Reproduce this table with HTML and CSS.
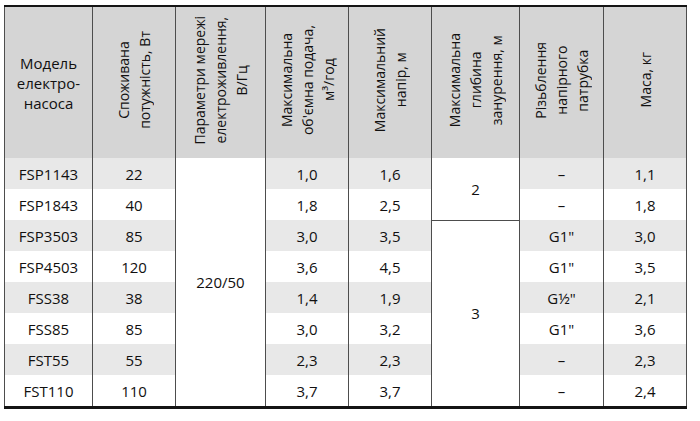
FILE: index.html
```html
<!DOCTYPE html>
<html lang="uk">
<head>
<meta charset="utf-8">
<title>Технічні характеристики</title>
<link rel="stylesheet" href="styles.css">
</head>
<body>
<table class="spec">
  <colgroup>
    <col class="c1"><col class="c2"><col class="c3"><col class="c4">
    <col class="c5"><col class="c6"><col class="c7"><col class="c8">
  </colgroup>
  <thead>
    <tr>
      <th class="h-flat">Модель<br>електро-<br>насоса</th>
      <th><div class="vt">Споживана<br>потужність, Вт</div></th>
      <th><div class="vt">Параметри мережі<br>електроживлення,<br>В/Гц</div></th>
      <th><div class="vt">Максимальна<br>об'ємна подача,<br>м³/год</div></th>
      <th><div class="vt">Максимальний<br>напір, м</div></th>
      <th><div class="vt">Максимальна<br>глибина<br>занурення, м</div></th>
      <th><div class="vt">Різьблення<br>напірного<br>патрубка</div></th>
      <th><div class="vt">Маса, кг</div></th>
    </tr>
  </thead>
  <tbody>
    <tr class="odd">
      <td>FSP1143</td><td>22</td><td class="merged" rowspan="8">220/50</td><td>1,0</td><td>1,6</td><td class="merged split" rowspan="2">2</td><td>–</td><td>1,1</td>
    </tr>
    <tr>
      <td>FSP1843</td><td>40</td><td>1,8</td><td>2,5</td><td>–</td><td>1,8</td>
    </tr>
    <tr class="odd">
      <td>FSP3503</td><td>85</td><td>3,0</td><td>3,5</td><td class="merged" rowspan="6">3</td><td>G1"</td><td>3,0</td>
    </tr>
    <tr>
      <td>FSP4503</td><td>120</td><td>3,6</td><td>4,5</td><td>G1"</td><td>3,5</td>
    </tr>
    <tr class="odd">
      <td>FSS38</td><td>38</td><td>1,4</td><td>1,9</td><td>G½"</td><td>2,1</td>
    </tr>
    <tr>
      <td>FSS85</td><td>85</td><td>3,0</td><td>3,2</td><td>G1"</td><td>3,6</td>
    </tr>
    <tr class="odd">
      <td>FST55</td><td>55</td><td>2,3</td><td>2,3</td><td>–</td><td>2,3</td>
    </tr>
    <tr>
      <td>FST110</td><td>110</td><td>3,7</td><td>3,7</td><td>–</td><td>2,4</td>
    </tr>
  </tbody>
</table>
</body>
</html>
```
FILE: styles.css
```css
html, body {
  margin: 0;
  background: #ffffff;
}
body {
  padding: 5px 0 0 4px;
  font-family: "Open Sans", "Noto Sans", sans-serif;
  color: #111010;
}
.spec {
  border-collapse: collapse;
  table-layout: fixed;
  width: 682px;
  border-top: 2px solid #141414;
  border-bottom: 3px solid #141414;
  border-left: 1px solid #4d4d4d;
  border-right: 1px solid #4d4d4d;
}
.c1 { width: 88px; }
.c2 { width: 83px; }
.c3 { width: 90px; }
.c4 { width: 83px; }
.c5 { width: 83px; }
.c6 { width: 88px; }
.c7 { width: 84px; }
.c8 { width: 83px; }

.spec th {
  height: 151px;
  padding: 0;
  background: #d5d5d5;
  font-weight: normal;
  font-size: 14px;
  line-height: 21px;
  text-align: center;
  vertical-align: middle;
  border-left: 1px solid #4d4d4d;
  border-right: 1px solid #4d4d4d;
}
.spec th.h-flat {
  font-size: 15px;
  line-height: 20px;
}
.vt {
  display: inline-block;
  writing-mode: vertical-rl;
  transform: rotate(180deg);
  white-space: nowrap;
  text-align: center;
}
.spec td {
  height: 31px;
  padding: 0;
  font-size: 15px;
  text-align: center;
  vertical-align: middle;
  border-left: 1px solid #4d4d4d;
  border-right: 1px solid #4d4d4d;
  background: #ffffff;
}
.spec tr.odd td {
  background: #e8e8e8;
}
.spec tr td.merged {
  background: #ffffff;
}
.spec td.split {
  border-bottom: 1px solid #4d4d4d;
}
```
